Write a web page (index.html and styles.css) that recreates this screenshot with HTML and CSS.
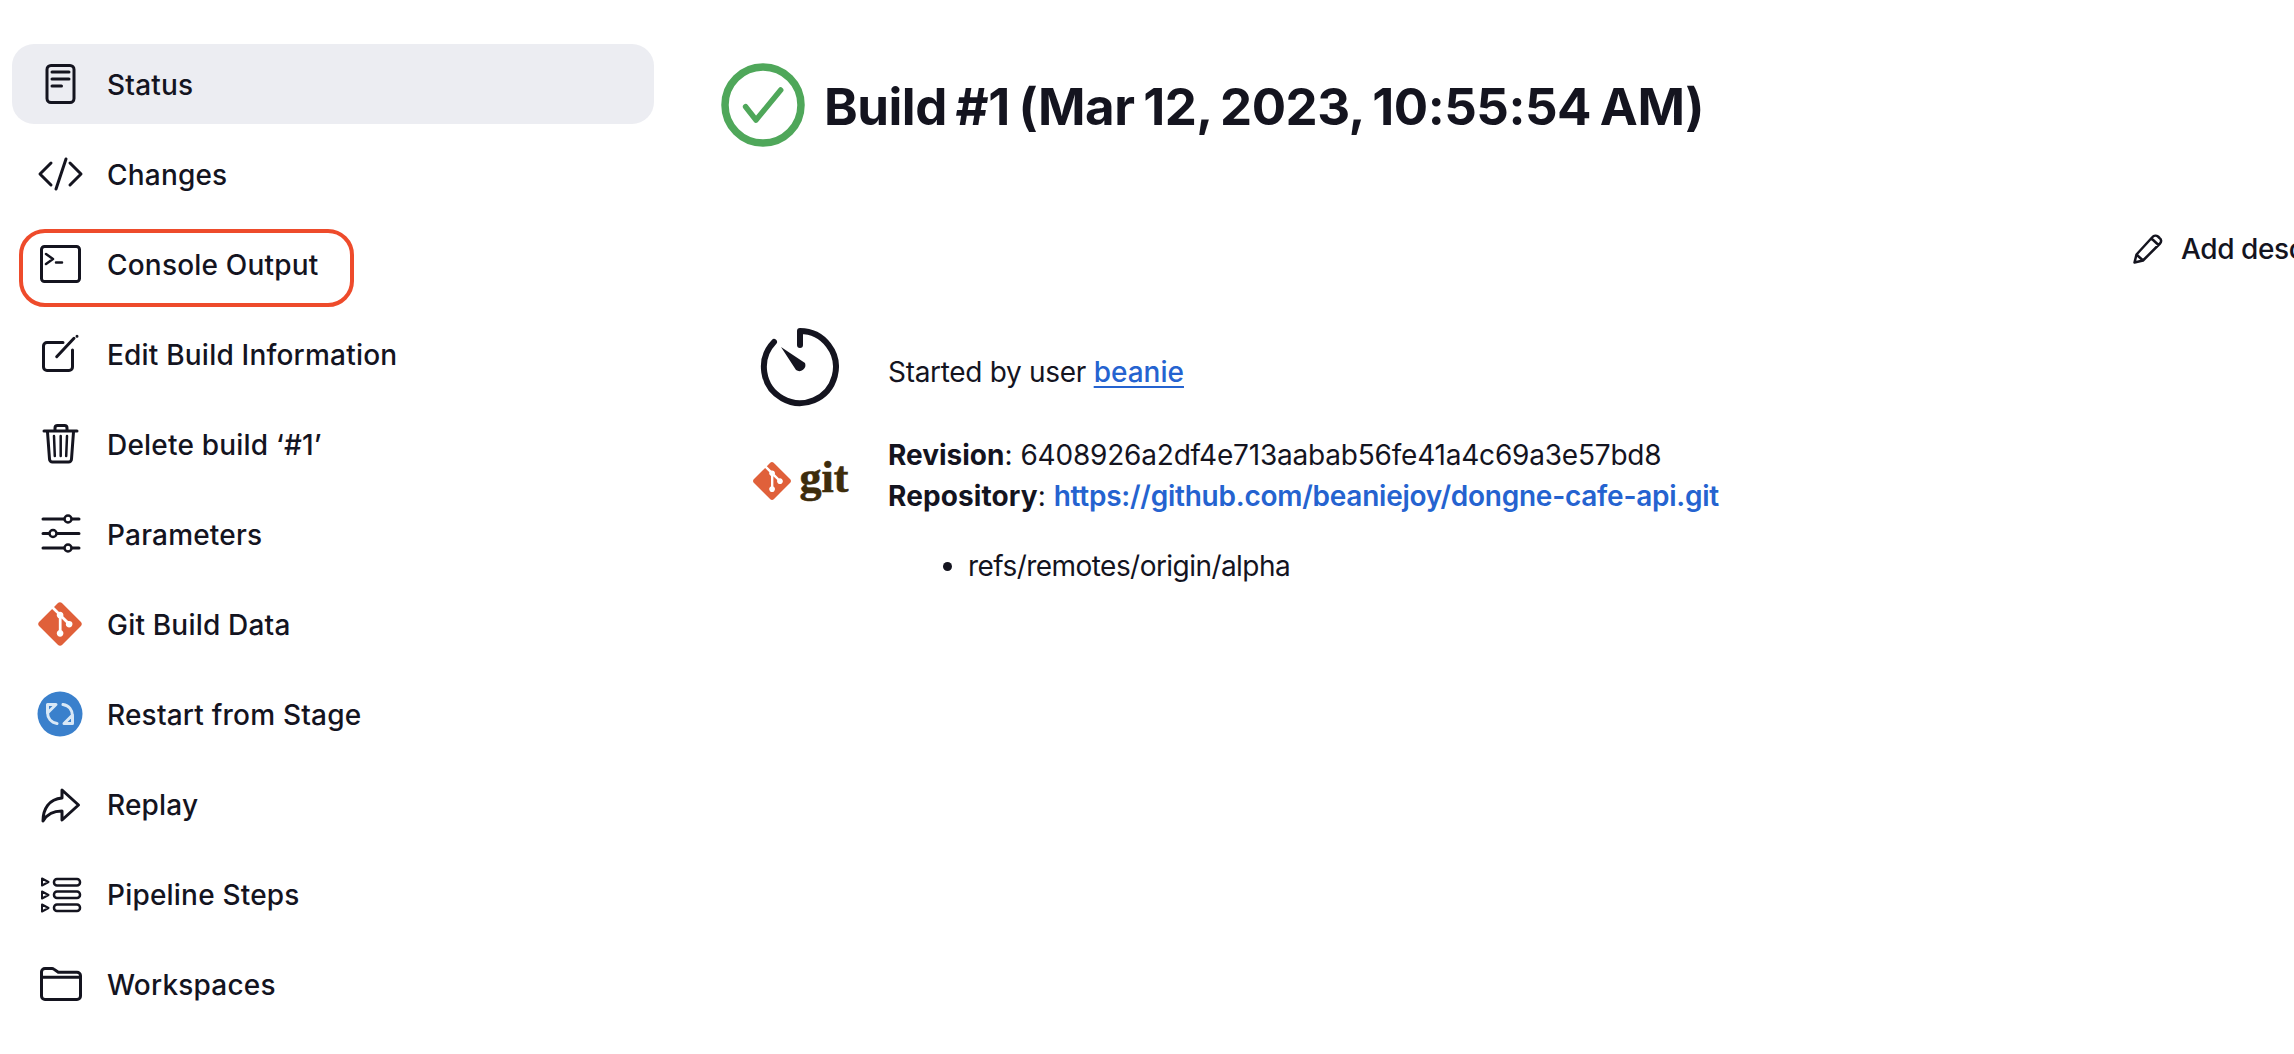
FILE: index.html
```html
<!DOCTYPE html>
<html lang="en">
<head>
<meta charset="utf-8">
<title>Build #1</title>
<link rel="stylesheet" href="styles.css">
</head>
<body>
<div class="app">
  <nav class="side">
    <a class="item active"><svg class="ico" viewBox="0 0 56 56"><rect x="15" y="9.5" width="27" height="37" rx="4"/><path d="M20 16h17M20 23h17M20 30h9.5"/></svg><span>Status</span></a>
    <a class="item"><svg class="ico" viewBox="0 0 56 56"><path d="M19 17 8 28l11 11M38 17l11 11-11 11M34 13 24 43"/></svg><span>Changes</span></a>
    <a class="item marked"><svg class="ico" viewBox="0 0 56 56"><rect x="9.5" y="10.5" width="38" height="35" rx="3"/><path class="thin" d="m14 18 7 5-7 5M24 26.500h6"/></svg><span>Console Output</span></a>
    <a class="item"><svg class="ico" viewBox="0 0 56 56"><path d="M31 16.500H15a3.500 3.500 0 0 0-3.500 3.500v21a3.500 3.500 0 0 0 3.500 3.500h22a3.500 3.500 0 0 0 3.500-3.500V24M24.700 30.700 42 12.300M45 10.300v0"/></svg><span>Edit Build Information</span></a>
    <a class="item"><svg class="ico" viewBox="0 0 56 56"><path d="M12 15h33M23 14v-2a2.500 2.500 0 0 1 2.500-2.500h7A2.500 2.500 0 0 1 35 12v2M15.500 16l2 27a3 3 0 0 0 3 3h16a3 3 0 0 0 3-3l2-27"/><path class="thin" d="M22 20l.8 20M28.700 20v20M35 20l-.8 20"/></svg><span>Delete build ‘#1’</span></a>
    <a class="item"><svg class="ico" viewBox="0 0 56 56"><path d="M11 13h36M11 27.500h36M11 42h36"/><circle class="knob" cx="36" cy="13" r="3.500"/><circle class="knob" cx="21" cy="27.500" r="3.500"/><circle class="knob" cx="36" cy="42" r="3.500"/></svg><span>Parameters</span></a>
    <a class="item"><svg class="logo" viewBox="0 0 97 97"><path class="gitmark" d="M92.71 44.408 52.591 4.291c-2.31-2.311-6.057-2.311-8.369 0l-8.33 8.332L46.459 23.19c2.456-.83 5.272-.273 7.229 1.685 1.969 1.97 2.521 4.81 1.67 7.275l10.186 10.185c2.465-.85 5.307-.3 7.275 1.671 2.75 2.75 2.75 7.206 0 9.958-2.752 2.751-7.208 2.751-9.961 0-2.068-2.07-2.58-5.11-1.531-7.658l-9.5-9.499v24.997c.67.332 1.303.774 1.861 1.332 2.75 2.75 2.75 7.206 0 9.959-2.75 2.749-7.209 2.749-9.957 0-2.75-2.754-2.75-7.21 0-9.959.68-.679 1.467-1.193 2.307-1.537v-25.23c-.84-.344-1.625-.853-2.307-1.537-2.083-2.082-2.584-5.14-1.516-7.698L31.798 16.715 4.288 44.222c-2.311 2.313-2.311 6.06 0 8.371l40.121 40.118c2.31 2.311 6.056 2.311 8.369 0L92.71 52.779c2.311-2.311 2.311-6.06 0-8.371z"/></svg><span>Git Build Data</span></a>
    <a class="item"><svg class="restart" viewBox="0 0 56 56"><circle class="blue" cx="28" cy="28" r="22.500"/><path class="arrows" d="M25 37.500C19 36.500 15.500 32 15.500 26V18.500H24L15.500 27M31 18.500C37 19.500 40.500 24 40.500 30V37.500H32L40.500 29"/></svg><span>Restart from Stage</span></a>
    <a class="item"><svg class="ico" viewBox="0 0 56 56"><path d="M30 14 46.500 29 30 44v-9c-8 0-15 3-19 10 0-12 6-22 19-23z"/></svg><span>Replay</span></a>
    <a class="item"><svg class="ico" viewBox="0 0 56 56"><g class="thin"><rect x="22" y="13" width="26" height="6.500" rx="3"/><rect x="22" y="25.500" width="26" height="6.500" rx="3"/><rect x="22" y="38.500" width="26" height="6.500" rx="3"/></g><path class="tri" d="m10 12.500 6.500 3.500-6.500 3.500zM10 25.500l6.500 3.500-6.500 3.500zM10 38.500l6.500 3.500-6.500 3.500z"/></svg><span>Pipeline Steps</span></a>
    <a class="item"><svg class="ico" viewBox="0 0 56 56"><path d="M13 12.500h7a3 3 0 0 1 1.800.6l4.500 3.200H45a3.500 3.500 0 0 1 3.500 3.500V40a3.500 3.500 0 0 1-3.500 3.500H13A3.500 3.500 0 0 1 9.500 40V16a3.500 3.500 0 0 1 3.500-3.500zM9.500 21.300h39"/></svg><span>Workspaces</span></a>
  </nav>
  <main class="main">
    <header class="head">
      <svg class="state" viewBox="0 0 84 84"><circle cx="42" cy="42" r="38"/><path d="M24.600 43.700 35 57 59.700 27"/></svg>
      <h1>Build #1 (Mar 12, 2023, 10:55:54 AM)</h1>
    </header>
    <div class="actions">
      <svg class="pencil" viewBox="0 0 30 30"><path d="M1.500 28.500 3.500 20.500 19.500 3a4 4 0 0 1 5.500-.5l1.500 1.500a3.500 3.500 0 0 1 .5 5.500L10 26.500zM3.500 20.500l6.500 6M18.500 4.500l7 6.500"/></svg>
      <span>Add description</span>
    </div>
    <section class="row first">
      <div class="cell">
        <svg class="clock" viewBox="0 0 80 80"><path d="M40 4a36 36 0 1 1-26 11M40 4v14"/><path class="needle" d="M21 20 45 36a6 6 0 0 1-9 7z"/></svg>
      </div>
      <div class="text lead">Started by user <a class="link under" href="#">beanie</a></div>
    </section>
    <section class="row">
      <div class="cell gitcell">
        <svg class="gitlogo" viewBox="0 0 97 97"><path class="gitmark" d="M92.71 44.408 52.591 4.291c-2.31-2.311-6.057-2.311-8.369 0l-8.33 8.332L46.459 23.19c2.456-.83 5.272-.273 7.229 1.685 1.969 1.97 2.521 4.81 1.67 7.275l10.186 10.185c2.465-.85 5.307-.3 7.275 1.671 2.75 2.75 2.75 7.206 0 9.958-2.752 2.751-7.208 2.751-9.961 0-2.068-2.07-2.58-5.11-1.531-7.658l-9.5-9.499v24.997c.67.332 1.303.774 1.861 1.332 2.75 2.75 2.75 7.206 0 9.959-2.75 2.749-7.209 2.749-9.957 0-2.75-2.754-2.75-7.21 0-9.959.68-.679 1.467-1.193 2.307-1.537v-25.23c-.84-.344-1.625-.853-2.307-1.537-2.083-2.082-2.584-5.14-1.516-7.698L31.798 16.715 4.288 44.222c-2.311 2.313-2.311 6.06 0 8.371l40.121 40.118c2.31 2.311 6.056 2.311 8.369 0L92.71 52.779c2.311-2.311 2.311-6.06 0-8.371z"/></svg>
        <span class="gitword">git</span>
      </div>
      <div class="text">
        <div class="revision"><b>Revision</b>: <span class="hash">6408926a2df4e713aabab56fe41a4c69a3e57bd8</span></div>
        <div class="repo"><b>Repository</b>: <a class="link strong" href="#">https://github.com/beaniejoy/dongne-cafe-api.git</a></div>
        <ul class="refs"><li>refs/remotes/origin/alpha</li></ul>
      </div>
    </section>
  </main>
</div>
</body>
</html>
```
FILE: styles.css
```css
*, *::after { box-sizing: border-box; }
html, body { margin: 0; height: 100%; overflow: hidden; background: #fff; }
body { font-family: Inter, "Liberation Sans", sans-serif; font-size: 28px; line-height: 42px; color: #14141f; }
.app { display: flex; width: 2294px; height: 1054px; }
.side { flex: none; width: 721px; padding: 44px 0 0 12px; display: flex; flex-direction: column; gap: 10px; }
.item { position: relative; display: flex; align-items: center; gap: 19px; width: 642px; height: 80px; padding-left: 20px; border-radius: 22px; font-weight: 450; letter-spacing: 0.2px; color: #14141f; }
.item span { padding-top: 2px; }
.item.active { background: #ecedf2; }
.item.marked::after { content: ""; position: absolute; left: 7px; top: 5px; width: 335px; height: 78px; border: 4px solid #ee4b2b; border-radius: 26px; }
.ico { flex: none; width: 56px; height: 56px; fill: none; stroke: #14141f; stroke-width: 3; stroke-linecap: round; stroke-linejoin: round; }
.ico .thin { stroke-width: 2.500; fill: none; }
.ico .tri { stroke-width: 2; }
.ico .knob { fill: #fff; stroke-width: 2.500; }
.logo { flex: none; width: 56px; height: 56px; padding: 5px; overflow: visible; }
.restart { flex: none; width: 56px; height: 56px; }
.gitmark { fill: #e0603a; }
.blue { fill: #3a80cc; }
.arrows { fill: none; stroke: #d9e8f6; stroke-width: 3; stroke-linecap: round; stroke-linejoin: round; filter: blur(0.5px); }
.main { flex: 1; min-width: 0; padding-top: 63px; display: flex; flex-direction: column; }
.head { display: flex; align-items: center; gap: 19px; height: 84px; }
.state { flex: none; width: 84px; height: 84px; fill: none; stroke: #4fa75a; stroke-width: 7.500; stroke-linecap: round; stroke-linejoin: round; }
.state path { stroke-width: 5.500; }
h1 { margin: 0; padding-top: 3px; font-size: 51px; line-height: 62px; font-weight: 700; white-space: nowrap; letter-spacing: -0.5px; word-spacing: -2.800px; }
.actions { display: flex; align-items: center; gap: 18px; height: 40px; margin-top: 82px; padding-left: 1412px; white-space: nowrap; font-weight: 450; letter-spacing: -0.4px; }
.pencil { flex: none; width: 30px; height: 30px; fill: none; stroke: #14141f; stroke-width: 2.500; stroke-linejoin: round; }
.row { display: flex; gap: 9px; margin-top: 28px; }
.row.first { margin-top: 58px; height: 78px; }
.cell { flex: none; width: 158px; display: flex; justify-content: center; }
.clock { width: 80px; height: 80px; fill: none; stroke: #14141f; stroke-width: 6; stroke-linecap: round; }
.needle { fill: #14141f; stroke: none; }
.lead { padding-top: 24px; letter-spacing: -0.3px; }
.lead .link { letter-spacing: 0; }
.gitcell { padding-top: 28px; align-items: flex-start; gap: 8px; }
.gitlogo { flex: none; width: 40px; height: 40px; }
.gitword { font-family: "Liberation Serif", serif; font-size: 44px; line-height: 34px; font-weight: 700; color: #3d2c0b; -webkit-text-stroke: 0.6px #3d2c0b; }
.link { color: #2563d0; text-decoration: none; }
.under { font-weight: 500; text-decoration: underline; text-underline-offset: 4px; }
.strong { font-weight: 600; letter-spacing: -0.25px; }
b { font-weight: 700; }
.repo b { letter-spacing: 0.1px; }
.revision { position: relative; top: 1px; }
.hash { letter-spacing: -0.2px; }
.refs { margin: 28px 0 0; padding-left: 80px; letter-spacing: -0.55px; }
```
